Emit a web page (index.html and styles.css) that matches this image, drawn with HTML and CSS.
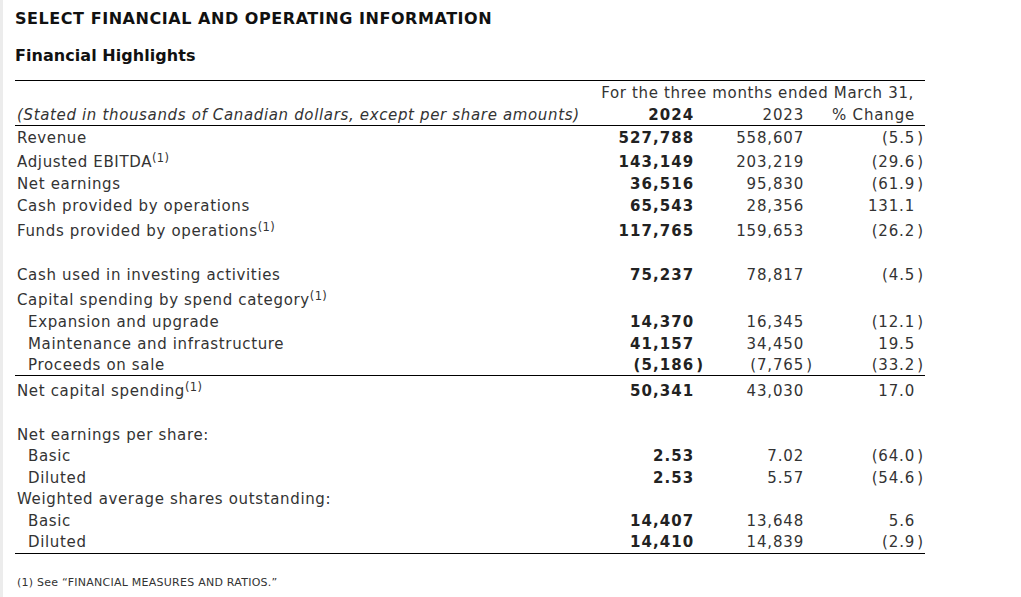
FILE: index.html
```html
<!DOCTYPE html>
<html>
<head>
<meta charset="utf-8">
<link rel="stylesheet" href="styles.css">
</head>
<body>
<div class="page">
  <h1 class="title">SELECT FINANCIAL AND OPERATING INFORMATION</h1>
  <h2 class="subtitle">Financial Highlights</h2>
  <table class="fin">
    <colgroup>
      <col class="c-label">
      <col class="c-24">
      <col class="c-23">
      <col class="c-chg">
    </colgroup>
    <thead>
      <tr class="period">
        <th></th>
        <th colspan="3" class="period-cell">For the three months ended March 31,</th>
      </tr>
      <tr class="years">
        <th class="stated">(Stated in thousands of Canadian dollars, except per share amounts)</th>
        <th class="num b">2024<span class="p h">)</span></th>
        <th class="num">2023<span class="p h">)</span></th>
        <th class="num chg">% Change<span class="p h">)</span></th>
      </tr>
    </thead>
    <tbody>
      <tr><td>Revenue</td><td class="num b">527,788<span class="p h">)</span></td><td class="num">558,607<span class="p h">)</span></td><td class="num chg">(5.5<span class="p">)</span></td></tr>
      <tr class="sup-row"><td>Adjusted EBITDA<sup>(1)</sup></td><td class="num b">143,149<span class="p h">)</span></td><td class="num">203,219<span class="p h">)</span></td><td class="num chg">(29.6<span class="p">)</span></td></tr>
      <tr><td>Net earnings</td><td class="num b">36,516<span class="p h">)</span></td><td class="num">95,830<span class="p h">)</span></td><td class="num chg">(61.9<span class="p">)</span></td></tr>
      <tr><td>Cash provided by operations</td><td class="num b">65,543<span class="p h">)</span></td><td class="num">28,356<span class="p h">)</span></td><td class="num chg">131.1<span class="p h">)</span></td></tr>
      <tr class="tall"><td>Funds provided by operations<sup>(1)</sup></td><td class="num b">117,765<span class="p h">)</span></td><td class="num">159,653<span class="p h">)</span></td><td class="num chg">(26.2<span class="p">)</span></td></tr>
      <tr class="blank"><td colspan="4"></td></tr>
      <tr><td>Cash used in investing activities</td><td class="num b">75,237<span class="p h">)</span></td><td class="num">78,817<span class="p h">)</span></td><td class="num chg">(4.5<span class="p">)</span></td></tr>
      <tr class="tall"><td>Capital spending by spend category<sup>(1)</sup></td><td></td><td></td><td></td></tr>
      <tr><td class="ind">Expansion and upgrade</td><td class="num b">14,370<span class="p h">)</span></td><td class="num">16,345<span class="p h">)</span></td><td class="num chg">(12.1<span class="p">)</span></td></tr>
      <tr><td class="ind">Maintenance and infrastructure</td><td class="num b">41,157<span class="p h">)</span></td><td class="num">34,450<span class="p h">)</span></td><td class="num chg">19.5<span class="p h">)</span></td></tr>
      <tr class="ruled short"><td class="ind">Proceeds on sale</td><td class="num b">(5,186<span class="p">)</span></td><td class="num">(7,765<span class="p">)</span></td><td class="num chg">(33.2<span class="p">)</span></td></tr>
      <tr class="tall"><td>Net capital spending<sup>(1)</sup></td><td class="num b">50,341<span class="p h">)</span></td><td class="num">43,030<span class="p h">)</span></td><td class="num chg">17.0<span class="p h">)</span></td></tr>
      <tr class="blank"><td colspan="4"></td></tr>
      <tr><td>Net earnings per share:</td><td></td><td></td><td></td></tr>
      <tr class="tight"><td class="ind">Basic</td><td class="num b">2.53<span class="p h">)</span></td><td class="num">7.02<span class="p h">)</span></td><td class="num chg">(64.0<span class="p">)</span></td></tr>
      <tr class="tight"><td class="ind">Diluted</td><td class="num b">2.53<span class="p h">)</span></td><td class="num">5.57<span class="p h">)</span></td><td class="num chg">(54.6<span class="p">)</span></td></tr>
      <tr class="tight"><td>Weighted average shares outstanding:</td><td></td><td></td><td></td></tr>
      <tr class="tight"><td class="ind">Basic</td><td class="num b">14,407<span class="p h">)</span></td><td class="num">13,648<span class="p h">)</span></td><td class="num chg">5.6<span class="p h">)</span></td></tr>
      <tr class="tight ruled"><td class="ind">Diluted</td><td class="num b">14,410<span class="p h">)</span></td><td class="num">14,839<span class="p h">)</span></td><td class="num chg">(2.9<span class="p">)</span></td></tr>
    </tbody>
  </table>
  <p class="note">(1) See “FINANCIAL MEASURES AND RATIOS.”</p>
</div>
</body>
</html>
```

FILE: styles.css
```css
html, body {
  margin: 0;
  padding: 0;
  background: #ffffff;
}
body {
  font-family: "DejaVu Sans", Verdana, sans-serif;
  color: #333333;
  border-left: 3px solid #ececec;
  min-height: 597px;
  box-sizing: border-box;
}
.page {
  padding: 10px 0 0 12px;
}
.title {
  margin: 0;
  font-size: 16px;
  font-weight: bold;
  color: #111111;
  line-height: 18px;
  letter-spacing: 0.55px;
}
.subtitle {
  margin: 19px 0 0;
  font-size: 16px;
  font-weight: bold;
  color: #111111;
  line-height: 18px;
  letter-spacing: 0.05px;
}
.fin {
  margin-top: 15px;
  width: 910px;
  border-collapse: collapse;
  font-size: 15px;
  line-height: 16px;
  letter-spacing: 0.65px;
  border-top: 1px solid #000;
}
.c-label { width: 585px; }
.c-24 { width: 103px; }
.c-23 { width: 109px; }
.c-chg { width: 113px; }
.fin th, .fin td {
  padding: 3.5px 0 2.5px;
  font-weight: normal;
  text-align: left;
  white-space: nowrap;
  vertical-align: bottom;
}
.fin td:first-child, .fin th:first-child {
  padding-left: 2px;
}
.fin .period th {
  padding-top: 4px;
  padding-bottom: 2px;
}
.period-cell {
  text-align: right !important;
  padding-right: 11px !important;
}
.fin .years th {
  border-bottom: 1px solid #000;
  padding-top: 4px;
  padding-bottom: 2px;
}
.stated {
  font-style: italic;
}
.fin .num {
  text-align: right;
  letter-spacing: 0.85px;
}
.fin .chg {
  padding-right: 2px;
}
.fin .b {
  font-weight: bold;
  color: #222;
  letter-spacing: 1.05px;
}
.p {
  display: inline-block;
  padding-left: 2px;
  letter-spacing: 0;
}
.p.h {
  visibility: hidden;
}
.fin td.ind {
  padding-left: 13px;
}
sup {
  font-size: 11.5px;
  line-height: 0;
  vertical-align: 5px;
  letter-spacing: 0.3px;
}
.fin .sup-row td {
  padding-top: 5.5px;
}
.fin .tall td {
  padding-top: 6.5px;
}
.fin .short td {
  padding-top: 2.5px;
}
.fin .tight td {
  padding-top: 3px;
}
.ruled td {
  border-bottom: 1px solid #000;
}
.fin .blank td {
  height: 22px;
  padding: 0;
}
.note {
  margin: 22px 0 0 2px;
  font-size: 11px;
  letter-spacing: 0.25px;
  color: #333;
}
```
